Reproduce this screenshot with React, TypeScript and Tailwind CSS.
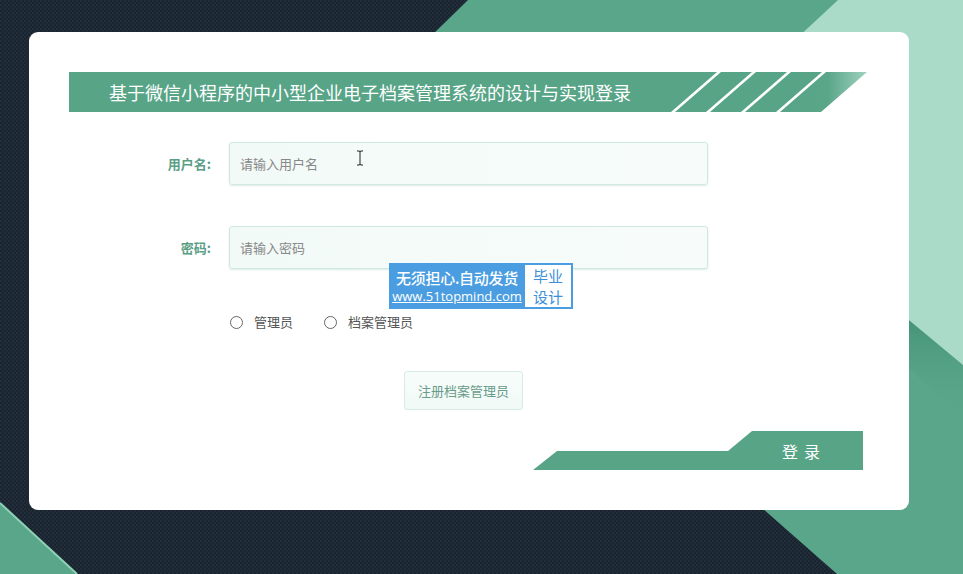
import React from "react";

const font = { fontFamily: '"Noto Sans CJK SC", "Noto Sans", sans-serif' };

function Background() {
    return (
        <svg
            className="absolute inset-0"
            width="963"
            height="574"
            viewBox="0 0 963 574"
        >
            <defs>
                <pattern id="carbon" width="4" height="4" patternUnits="userSpaceOnUse">
                    <rect width="4" height="4" fill="#1a2430" />
                    <rect x="0" y="0" width="2" height="2" fill="#222e3a" />
                    <rect x="2" y="2" width="2" height="2" fill="#202c37" />
                </pattern>
                <linearGradient id="edgeShade" x1="0" y1="0" x2="0" y2="1">
                    <stop offset="0" stopColor="#3b8a6c" />
                    <stop offset="1" stopColor="#5aa68a" stopOpacity="0" />
                </linearGradient>
            </defs>
            <rect width="963" height="574" fill="url(#carbon)" />
            <polygon
                points="468,0 963,0 963,574 837,574 230,40 427,40"
                fill="#5aa68a"
            />
            <polygon points="880,296 963,365 963,420 880,340" fill="url(#edgeShade)" />
            <polygon points="838,0 963,0 963,365 880,296 795,40" fill="#a9dbc8" />
            <polygon points="0,503 77,574 0,574" fill="#5aa68a" />
            <line x1="0" y1="503" x2="77" y2="574" stroke="#8fd3b6" strokeWidth="2" />
        </svg>
    );
}

function BannerTail() {
    return (
        <svg width="200" height="40" viewBox="0 0 200 40">
            <defs>
                <linearGradient id="tailFade" x1="0" y1="0" x2="1" y2="0">
                    <stop offset="0" stopColor="#58a487" />
                    <stop offset="0.55" stopColor="#5aa689" />
                    <stop offset="1" stopColor="#9fd2bf" />
                </linearGradient>
            </defs>
            <polygon points="0,0 50,0 4,40 0,40" fill="#58a487" />
            <polygon points="54,0 85,0 39,40 8,40" fill="#58a487" />
            <polygon points="89,0 120,0 74,40 43,40" fill="#58a487" />
            <polygon points="124,0 155,0 109,40 78,40" fill="#58a487" />
            <polygon points="159,0 200,0 154,40 113,40" fill="url(#tailFade)" />
        </svg>
    );
}

function LoginShape() {
    return (
        <svg className="absolute inset-0" width="330" height="39" viewBox="0 0 330 39">
            <polygon points="0,39 24,20 195,20 219,0 330,0 330,39" fill="#58a487" />
        </svg>
    );
}

function Radio({ label }: { label: string }) {
    return (
        <label className="flex items-center gap-[11px] text-[13px] text-[#555]">
            <span className="w-[13px] h-[13px] rounded-full border border-[#666] bg-white" />
            {label}
        </label>
    );
}

export default function App() {
    return (
        <div
            className="relative w-[963px] h-[574px] overflow-hidden bg-[#1a2430]"
            style={font}
        >
            <Background />

            <div className="relative ml-[29px] pt-[32px]">
                <div className="w-[880px] h-[478px] bg-white rounded-[9px] pt-[40px] pl-[40px]">
                    {/* title banner */}
                    <div className="flex w-[798px] h-[40px]">
                        <div className="flex-1 bg-[#58a487] pl-[40px] text-white text-[18px] leading-[40px]">
                            基于微信小程序的中小型企业电子档案管理系统的设计与实现登录
                        </div>
                        <BannerTail />
                    </div>

                    {/* username */}
                    <div className="flex items-center mt-[30px]">
                        <div className="w-[142px] text-right text-[13px] font-bold text-[#5b9e86]">
                            用户名:
                        </div>
                        <input
                            placeholder="请输入用户名"
                            className="ml-[18px] w-[479px] h-[43px] rounded-[3px] border border-[#cfe9e0] bg-gradient-to-r from-[#f2faf7] to-[#f7fcfa] px-[10px] text-[13px] placeholder:text-[#888] outline-none shadow-[0_1px_2px_rgba(120,180,160,0.25)]"
                        />
                    </div>

                    {/* password */}
                    <div className="flex items-center mt-[41px]">
                        <div className="w-[142px] text-right text-[13px] font-bold text-[#5b9e86]">
                            密码:
                        </div>
                        <input
                            placeholder="请输入密码"
                            className="ml-[18px] w-[479px] h-[43px] rounded-[3px] border border-[#cfe9e0] bg-gradient-to-r from-[#f2faf7] to-[#f7fcfa] px-[10px] text-[13px] placeholder:text-[#888] outline-none shadow-[0_1px_2px_rgba(120,180,160,0.25)]"
                        />
                    </div>

                    {/* role */}
                    <div className="flex items-center gap-[31px] ml-[161px] mt-[44px] h-[18px]">
                        <Radio label="管理员" />
                        <Radio label="档案管理员" />
                    </div>

                    <button className="ml-[335px] mt-[40px] w-[119px] h-[39px] rounded-[3px] border border-[#d6ece4] bg-gradient-to-b from-[#f8fdfb] to-[#f0f9f6] text-[13px] text-[#6a9c8a]">
                        注册档案管理员
                    </button>

                    <div className="ml-[464px] mt-[21px]">
                        <button className="relative flex items-center justify-end w-[330px] h-[39px] pr-[37px] text-white text-[16px]">
                            <LoginShape />
                            <span className="relative tracking-[6px]">登录</span>
                        </button>
                    </div>
                </div>
            </div>

            {/* text cursor */}
            <svg className="absolute left-[355px] top-[150px]" width="10" height="16" viewBox="0 0 10 16">
                <path d="M2 1h2.5L5 2l.5-1H8M5 2v12M2 15h2.5L5 14l.5 1H8" stroke="#222" strokeWidth="1" fill="none" />
            </svg>

            {/* watermark */}
            <div className="absolute left-[389px] top-[263px] flex w-[184px] h-[46px] bg-[#4a9de0]">
                <div className="w-[136px] flex flex-col items-center justify-center text-white">
                    <div className="text-[15px] leading-[21px] font-medium tracking-[-0.3px]">无须担心.自动发货</div>
                    <div className="text-[13px] leading-[17px] underline" style={{ fontFamily: '"Open Sans", sans-serif' }}>
                        www.51topmind.com
                    </div>
                </div>
                <div className="my-[2px] mr-[2px] flex-1 bg-white flex flex-col items-center justify-center text-[#3e8fd8] text-[15px] leading-[21px]">
                    <span>毕业</span>
                    <span>设计</span>
                </div>
            </div>
        </div>
    );
}
